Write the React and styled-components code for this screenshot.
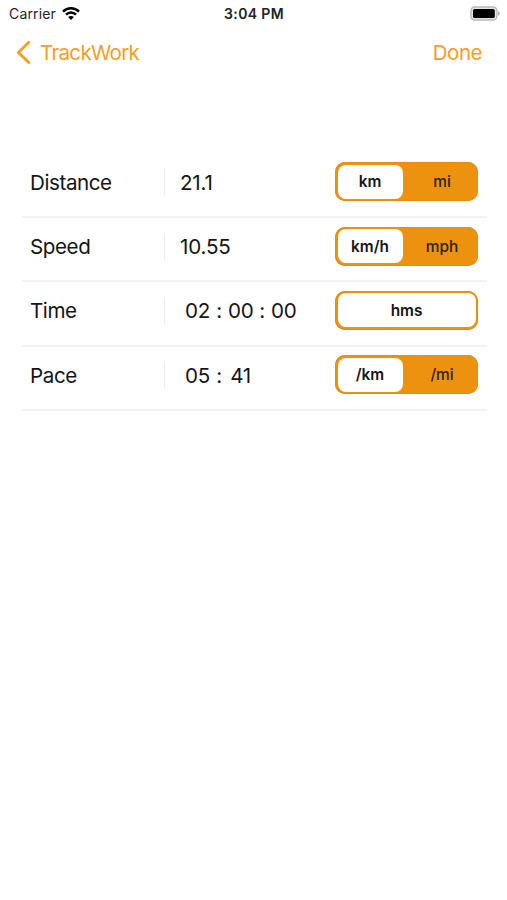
import React, { useState } from 'react'
import styled, { createGlobalStyle } from 'styled-components';

const GlobalStyle = createGlobalStyle`
    * {
        box-sizing: border-box;
    }
    body {
        margin: 0;
        background: #fff;
        color: #141414;
        font-family: Inter, "Liberation Sans", sans-serif;
    }
`;

const Screen = styled.div`
    width: 507px;
    height: 900px;
    background: #fff;
    overflow: hidden;
`;

const StatusBar = styled.div`
    display: grid;
    grid-template-columns: 1fr auto 1fr;
    align-items: center;
    height: 27px;
    padding: 0 7px 0 9px;
    font-size: 14px;
    line-height: 27px;
    color: #222;
`;

const Carrier = styled.div`
    display: flex;
    align-items: center;
    gap: 6px;
    letter-spacing: 0.15px;
`;

const Clock = styled.div`
    padding-right: 1px;
    font-weight: 600;
    letter-spacing: 0.35px;
`;

const Battery = styled.div`
    display: flex;
    justify-content: flex-end;
`;

const NavBar = styled.div`
    display: flex;
    align-items: center;
    justify-content: space-between;
    height: 50px;
    padding: 0 25px 0 16px;
`;

const NavButton = styled.button`
    display: flex;
    align-items: center;
    gap: 8px;
    padding: 1px 0 0;
    border: 0;
    background: none;
    color: #f99d1c;
    font-family: inherit;
    font-size: 20.6px;
    line-height: 26px;
    letter-spacing: ${props => props.$tight ? '-0.7px' : '-0.55px'};
    cursor: pointer;
`;

const List = styled.div`
    padding: 76.4px 20px 0 21px;
`;

const Row = styled.div`
    display: grid;
    grid-template-columns: 143px 171px 143px;
    align-items: center;
    height: 64.4px;
    padding: 0 0 5.8px;
    border-bottom: 2px solid #f3f3f3;
`;

const Label = styled.div`
    padding: 2px 0 0 9px;
    font-size: 20.6px;
    line-height: 26px;
    letter-spacing: -0.42px;
`;

const Value = styled.div`
    display: flex;
    align-items: center;
    height: 27px;
    padding: 1px 0 0 ${props => props.$time ? '20px' : '15px'};
    border-left: 1px solid #ededed;
    font-size: 20.6px;
    letter-spacing: ${props => props.$time ? '-0.3px' : '-0.2px'};
`;

const Digits = styled.span`
    width: 25px;
    text-align: center;
`;

const Colon = styled.span`
    width: 18px;
    text-align: center;
`;

const Segments = styled.div`
    display: flex;
    gap: 6px;
    width: 143px;
    height: 39px;
    padding: 2.5px;
    border-radius: 10px;
    background: #ec920f;
    box-shadow: inset 0 0 0 1px #e38d15;
`;

const Segment = styled.button`
    flex: ${props => props.$active && !props.$only ? '0 0 65px' : '1'};
    padding: 0;
    border: 0;
    border-radius: 8px;
    background: ${props => props.$active ? '#fff' : 'transparent'};
    color: ${props => props.$active ? '#141414' : '#302008'};
    font-family: inherit;
    font-size: 15.4px;
    font-weight: ${props => props.$active ? 600 : 500};
    cursor: pointer;
`;

const rows = [
    { name: 'Distance', value: '21.1', units: ['km', 'mi'] },
    { name: 'Speed', value: '10.55', units: ['km/h', 'mph'] },
    { name: 'Time', time: ['02', '00', '00'], units: ['hms'] },
    { name: 'Pace', time: ['05', '41'], units: ['/km', '/mi'] },
];

function WifiIcon() {
    return (
        <svg width="18" height="14" viewBox="0 0 18 14" fill="none" stroke="#000" strokeWidth="2.4">
            <path d="M1 4.6C5.4 .1 12.6 .1 17 4.6" />
            <path d="M4 7.7C6.8 4.8 11.2 4.8 14 7.7" />
            <path d="M9 13 6.1 10.1C7.7 8.5 10.3 8.5 11.9 10.1Z" fill="#000" stroke="none" />
        </svg>
    )
}

function BatteryIcon() {
    return (
        <svg width="30" height="16" viewBox="0 0 30 16">
            <rect x=".9" y="1" width="26" height="13" rx="3.8" fill="#e4e4e4" stroke="#b9b9b9" strokeWidth="1.4" />
            <rect x="3" y="2.9" width="21.8" height="9.2" rx="1.6" fill="#000" />
            <path d="M28 5.2C30.4 6 30.4 9 28 9.8Z" fill="#aaa" />
        </svg>
    )
}

function ListRow({ row }) {
    const [unit, setUnit] = useState(row.units[0]);

    return (
        <Row>
            <Label>{row.name}</Label>
            <Value $time={!!row.time}>
                {row.time
                    ? row.time.map((part, index) =>
                        <React.Fragment key={index}>
                            {index > 0 && <Colon>:</Colon>}
                            <Digits>{part}</Digits>
                        </React.Fragment>
                    )
                    : row.value}
            </Value>
            <Segments>
                {row.units.map(item =>
                    <Segment
                        key={item}
                        $active={item === unit}
                        $only={row.units.length === 1}
                        onClick={() => setUnit(item)}
                    >{item}</Segment>
                )}
            </Segments>
        </Row>
    )
}

export default function App() {
    return (
        <Screen>
            <GlobalStyle />
            <StatusBar>
                <Carrier>Carrier <WifiIcon /></Carrier>
                <Clock>3:04 PM</Clock>
                <Battery><BatteryIcon /></Battery>
            </StatusBar>
            <NavBar>
                <NavButton $tight>
                    <svg width="16" height="24" viewBox="0 0 16 24" fill="none" stroke="currentColor" strokeWidth="2.8" strokeLinecap="round" strokeLinejoin="round">
                        <path d="M12.8 1.2 2.4 11.4 12.8 21.6" />
                    </svg>
                    TrackWork
                </NavButton>
                <NavButton>Done</NavButton>
            </NavBar>
            <List>
                {rows.map(row => <ListRow key={row.name} row={row} />)}
            </List>
        </Screen>
    )
}
